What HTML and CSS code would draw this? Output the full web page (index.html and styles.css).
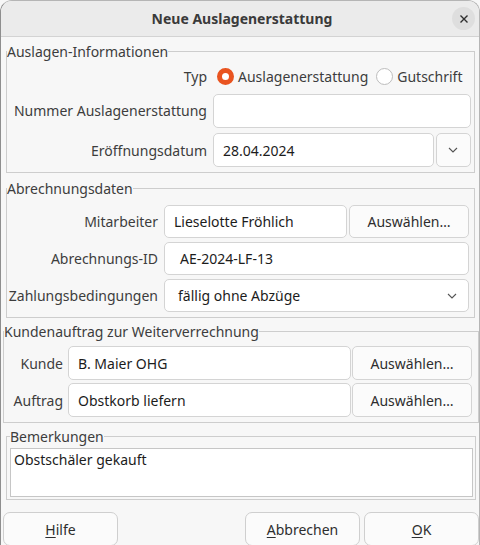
FILE: index.html
```html
<!DOCTYPE html>
<html lang="de">
<head>
<meta charset="utf-8">
<title>Neue Auslagenerstattung</title>
<link rel="stylesheet" href="styles.css">
</head>
<body>
<div class="window">
  <div class="titlebar">
    <span></span>
    <span class="title">Neue Auslagenerstattung</span>
    <button class="close" aria-label="Schließen">
      <svg width="10" height="10" viewBox="0 0 10 10"><path d="M1.5 1.5 L8.5 8.5 M8.5 1.5 L1.5 8.5" stroke="#2e2e2e" stroke-width="1.4" fill="none"/></svg>
    </button>
  </div>

  <fieldset class="group g1">
    <legend>Auslagen-Informationen</legend>
    <div class="form form1">
      <span class="lbl">Typ</span>
      <div class="radios">
        <span class="radio on"></span><span class="rtext">Auslagenerstattung</span>
        <span class="radio"></span><span class="rtext">Gutschrift</span>
      </div>
      <span class="lbl">Nummer Auslagenerstattung</span>
      <div class="input"></div>
      <span class="lbl">Eröffnungsdatum</span>
      <div class="pair date">
        <div class="input">28.04.2024</div>
        <div class="btn drop"><svg width="10" height="6" viewBox="0 0 10 6"><path d="M1 1 L5 5 L9 1" stroke="#555" stroke-width="1.1" fill="none"/></svg></div>
      </div>
    </div>
  </fieldset>

  <fieldset class="group g2">
    <legend>Abrechnungsdaten</legend>
    <div class="form form2">
      <span class="lbl">Mitarbeiter</span>
      <div class="pair sel2">
        <div class="input">Lieselotte Fröhlich</div>
        <div class="btn">Auswählen…</div>
      </div>
      <span class="lbl">Abrechnungs-ID</span>
      <div class="input wide-pad">AE-2024-LF-13</div>
      <span class="lbl">Zahlungsbedingungen</span>
      <div class="input combo"><span>fällig ohne Abzüge</span><svg width="10" height="6" viewBox="0 0 10 6"><path d="M1 1 L5 5 L9 1" stroke="#555" stroke-width="1.1" fill="none"/></svg></div>
    </div>
  </fieldset>

  <fieldset class="group g3">
    <legend>Kundenauftrag zur Weiterverrechnung</legend>
    <div class="form form3">
      <span class="lbl">Kunde</span>
      <div class="pair sel3">
        <div class="input">B. Maier OHG</div>
        <div class="btn">Auswählen…</div>
      </div>
      <span class="lbl">Auftrag</span>
      <div class="pair sel3">
        <div class="input">Obstkorb liefern</div>
        <div class="btn">Auswählen…</div>
      </div>
    </div>
  </fieldset>

  <fieldset class="group g4">
    <legend>Bemerkungen</legend>
    <div class="textarea">Obstschäler gekauft</div>
  </fieldset>

  <div class="actions">
    <div class="btn action"><u>H</u>ilfe</div>
    <div class="spacer"></div>
    <div class="btn action"><u>A</u>bbrechen</div>
    <div class="btn action"><u>O</u>K</div>
  </div>
</div>
</body>
</html>
```

FILE: styles.css
```css
html, body {
  margin: 0;
  padding: 0;
  background: #f7f7f7;
}
body {
  width: 480px;
  height: 545px;
  overflow: hidden;
  font-family: "Noto Sans", "Open Sans", sans-serif;
  font-size: 14px;
  color: #3d3d3d;
}
.window {
  box-sizing: border-box;
  width: 480px;
  height: 545px;
  border: 1px solid #b5b5b5;
  border-left-color: #8e8e8e;
  border-bottom: none;
  border-radius: 12px 12px 0 0;
  background: #f7f7f7;
  overflow: hidden;
}
.titlebar {
  height: 35px;
  background: #ebebeb;
  border-bottom: 1px solid #d3d3d3;
  display: grid;
  grid-template-columns: 1fr auto 1fr;
  align-items: center;
}
.title {
  font-weight: bold;
  font-size: 14px;
  color: #3a3a3a;
  padding-left: 4px;
}
.close {
  justify-self: end;
  margin-right: 4px;
  width: 23px;
  height: 23px;
  border-radius: 50%;
  border: none;
  background: #dedede;
  padding: 0;
  display: flex;
  align-items: center;
  justify-content: center;
}
.group {
  margin: 0;
  padding: 0;
  border: 1px solid #cdcdcd;
  min-width: 0;
}
.group legend {
  padding: 0;
  line-height: 17px;
  font-size: 14px;
  color: #3d3d3d;
}
.g1 { margin: 6px 4px 0 5px; padding: 5px 5px 5px 0; }
.g2 { margin: 7px 4px 0 5px; padding: 8px 5px 5px 0; }
.g3 { margin: 5px 0 0 2px; padding: 6px 6px 5px 0; }
.g4 { margin: 5px 3px 0 5px; padding: 3px 2px 2px 3px; }

.form {
  display: grid;
  align-items: center;
}
.form1 {
  grid-template-columns: 200px 1fr;
  column-gap: 6px;
  grid-template-rows: 22px 34px 34px;
  row-gap: 6px;
}
.form1 .radios { margin-top: 0; }
.form1 > .input { margin-top: 1px; }
.form2 {
  grid-template-columns: 151px 1fr;
  column-gap: 6px;
  grid-template-rows: 33px 33px 33px;
  row-gap: 4px;
}
.form3 {
  grid-template-columns: 59px 1fr;
  column-gap: 5px;
  grid-template-rows: 34px 34px;
  row-gap: 3px;
}
.lbl {
  text-align: right;
  white-space: nowrap;
  color: #3d3d3d;
}
.input {
  box-sizing: border-box;
  height: 100%;
  background: #ffffff;
  border: 1px solid #d4d4d4;
  border-radius: 5px;
  padding: 0 9px;
  display: flex;
  align-items: center;
  color: #1c1c1c;
  white-space: nowrap;
}
.wide-pad { padding-left: 15px; }
.combo {
  padding-left: 13px;
  padding-right: 11px;
  justify-content: space-between;
}
.btn {
  box-sizing: border-box;
  height: 100%;
  background: #fbfbfb;
  border: 1px solid #d4d4d4;
  border-radius: 5px;
  display: flex;
  align-items: center;
  justify-content: center;
  color: #2e2e2e;
  white-space: nowrap;
}
.pair {
  display: flex;
  height: 100%;
}
.pair .input { flex: 1; }
.date { gap: 2px; }
.date .drop { width: 35px; }
.sel2 { gap: 2px; }
.sel2 .btn { width: 120px; }
.sel3 { gap: 1px; }
.sel3 .btn { width: 120px; }

.radios {
  display: flex;
  align-items: center;
  margin-left: 4px;
  height: 100%;
}
.radio {
  box-sizing: border-box;
  width: 17px;
  height: 17px;
  border-radius: 50%;
  border: 1px solid #bdbdbd;
  background: #ffffff;
  margin-right: 4px;
  flex: none;
}
.radio.on {
  border: 5px solid #e95420;
  background: #ffffff;
}
.rtext { margin-right: 8px; color: #3d3d3d; }

.textarea {
  box-sizing: border-box;
  height: 49px;
  background: #ffffff;
  border: 1px solid #c6c6c6;
  padding: 2px 3px;
  color: #1c1c1c;
  line-height: 18px;
}

.actions {
  display: flex;
  gap: 4px;
  margin-top: 12px;
  padding-left: 2px;
  height: 34px;
}
.spacer { flex: 1; }
.action {
  width: 115px;
  border-color: #cfcfcf;
  border-radius: 7px;
}
.action u { text-underline-offset: 2px; }
```
